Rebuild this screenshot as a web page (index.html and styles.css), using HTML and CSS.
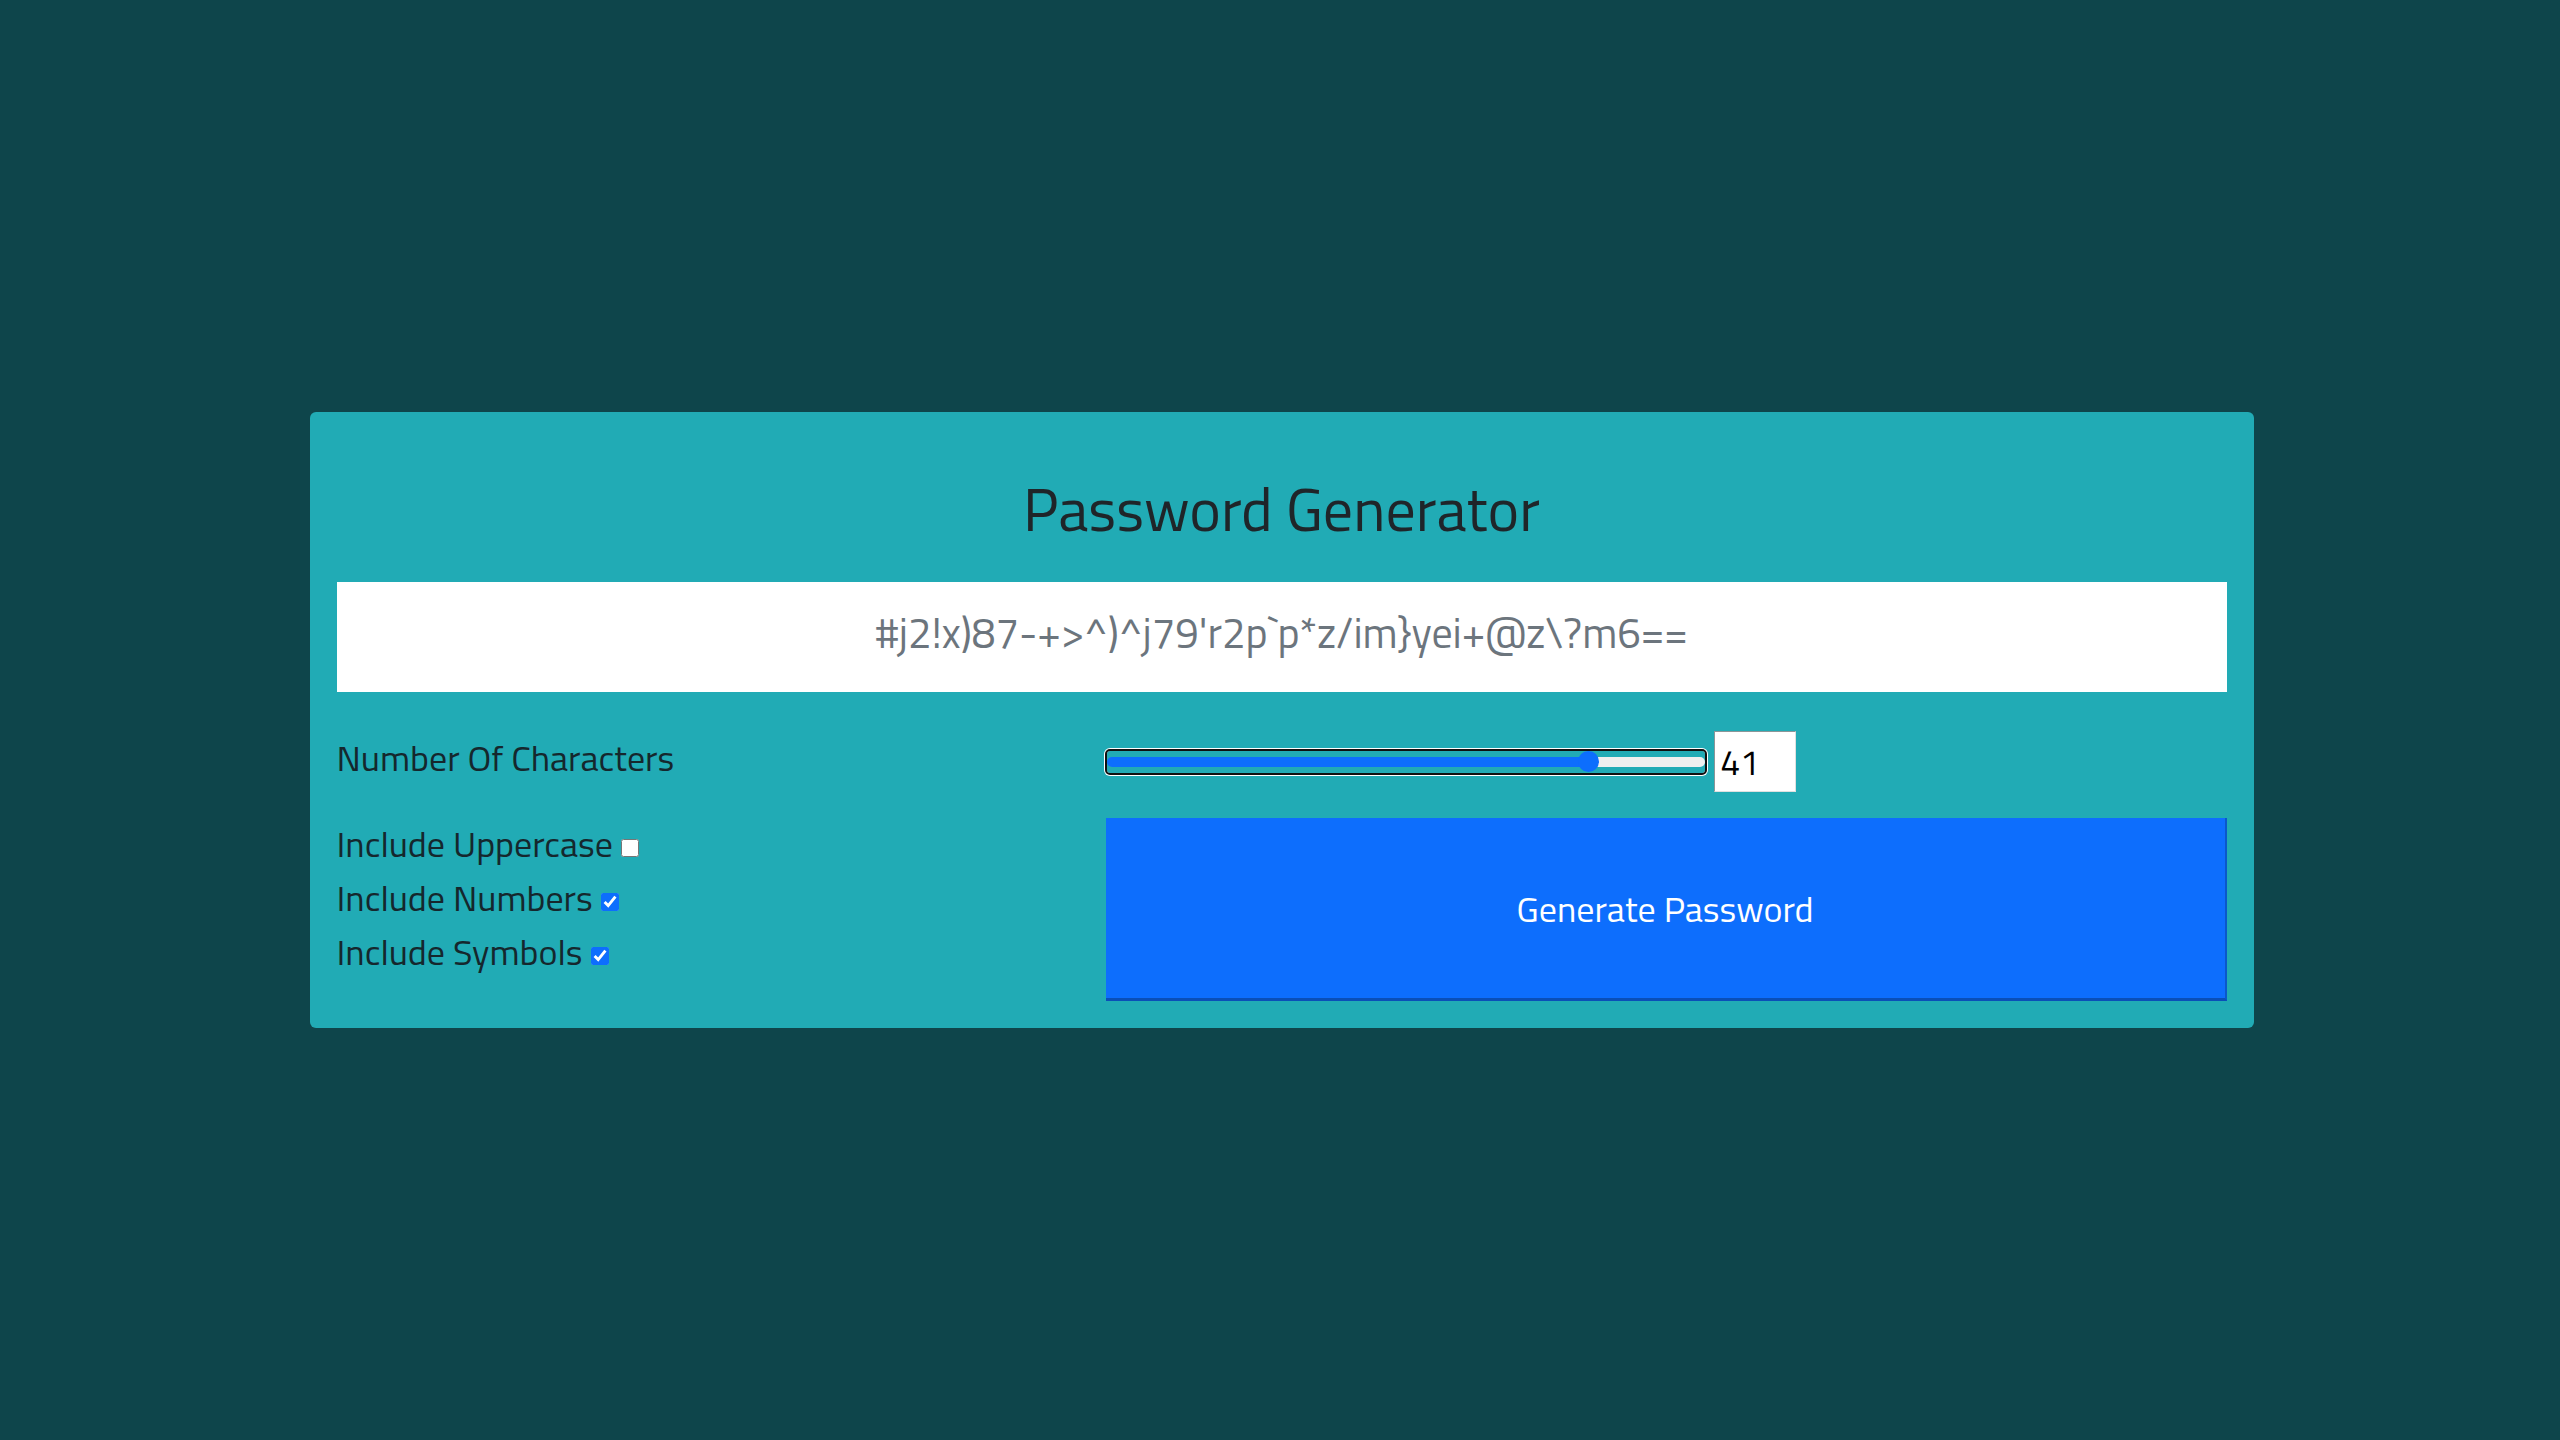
FILE: index.html
```html
<!DOCTYPE html>
<html lang="en">
<head>
<meta charset="utf-8">
<title>Password Generator</title>
<link rel="stylesheet" href="styles.css">
</head>
<body>
<main class="card">
  <h1 class="title">Password Generator</h1>
  <div class="output">#j2!x)87-+&gt;^)^j79'r2p`p*z/im}yei+@z\?m6==</div>
  <div class="row row-length">
    <label class="label" for="len">Number Of Characters</label>
    <div class="length-controls">
      <input id="len" class="range" type="range" min="1" max="50" value="41" style="--fill: 81.8%">
      <input class="number" type="number" value="41">
    </div>
  </div>
  <div class="row row-options">
    <div class="options">
      <label class="option">Include Uppercase <input class="check" type="checkbox"></label>
      <label class="option">Include Numbers <input class="check" type="checkbox" checked></label>
      <label class="option">Include Symbols <input class="check" type="checkbox" checked></label>
    </div>
    <button class="generate" type="button">Generate Password</button>
  </div>
</main>
</body>
</html>
```

FILE: styles.css
```css
html, body {
  margin: 0;
  padding: 0;
}

body {
  background: #0e454b;
  height: 100vh;
  display: flex;
  align-items: center;
  justify-content: center;
  font-family: "Titillium Web", "Liberation Sans Narrow", "DejaVu Sans Condensed", "Roboto Condensed", Roboto, sans-serif;
  color: #15272d;
}

.card {
  width: 1944px;
  box-sizing: border-box;
  margin-left: 3px;
  background: #21abb5;
  border-radius: 6px;
  padding: 60px 27px 27px 27px;
}

.title {
  margin: 0 0 36px 0;
  height: 74px;
  line-height: 74px;
  font-size: 60px;
  font-weight: 400;
  text-align: center;
  color: #1f2529;
}

.output {
  height: 110px;
  box-sizing: border-box;
  padding-bottom: 11px;
  background: #ffffff;
  display: flex;
  align-items: center;
  justify-content: center;
  font-size: 42px;
  color: #6c757d;
}

.row {
  display: grid;
  grid-template-columns: 769px 1fr;
}

.row-length {
  margin-top: 39px;
  height: 61px;
  align-items: center;
}

.label {
  font-size: 36px;
  line-height: 61px;
  margin-top: -8px;
}

.length-controls {
  display: flex;
  align-items: center;
  gap: 9px;
}

.range {
  -webkit-appearance: none;
  appearance: none;
  width: 598px;
  height: 22px;
  margin: 0 0 0 1px;
  background: transparent;
  border-radius: 3px;
  outline: 2px solid #101010;
  box-shadow: 0 0 0 3px #ffffff;
}

.range::-webkit-slider-runnable-track {
  height: 10px;
  border-radius: 5px;
  background: linear-gradient(to right, #0d6efd var(--fill), #efefef var(--fill));
}

.range::-webkit-slider-thumb {
  -webkit-appearance: none;
  appearance: none;
  width: 21px;
  height: 21px;
  border-radius: 50%;
  background: #0d6efd;
  border: none;
  margin-top: -5.5px;
}

.number {
  width: 82px;
  height: 61px;
  box-sizing: border-box;
  border: 1px solid #8a9698;
  border-right-color: #e0e0e0;
  border-bottom-color: #e0e0e0;
  background: #ffffff;
  font-family: inherit;
  font-size: 35px;
  color: #000000;
  padding: 0 0 0 6px;
  margin: 0;
}

.number::-webkit-inner-spin-button,
.number::-webkit-outer-spin-button {
  -webkit-appearance: none;
  margin: 0;
}

.row-options {
  margin-top: 26px;
  height: 183px;
}

.options {
  display: flex;
  flex-direction: column;
  margin-top: -1px;
}

.option {
  font-size: 36px;
  line-height: 54px;
  display: flex;
  align-items: center;
}

.check {
  width: 18px;
  height: 18px;
  margin: 8px 0 0 8px;
  accent-color: #0d6efd;
}

.generate {
  height: 183px;
  background: #0d6efd;
  border: none;
  border-right: 2px solid #0a58ca;
  border-bottom: 3px solid #0a4fb8;
  color: #ffffff;
  font-family: inherit;
  font-size: 36px;
  padding: 0;
  margin: 0;
  cursor: pointer;
}
```
